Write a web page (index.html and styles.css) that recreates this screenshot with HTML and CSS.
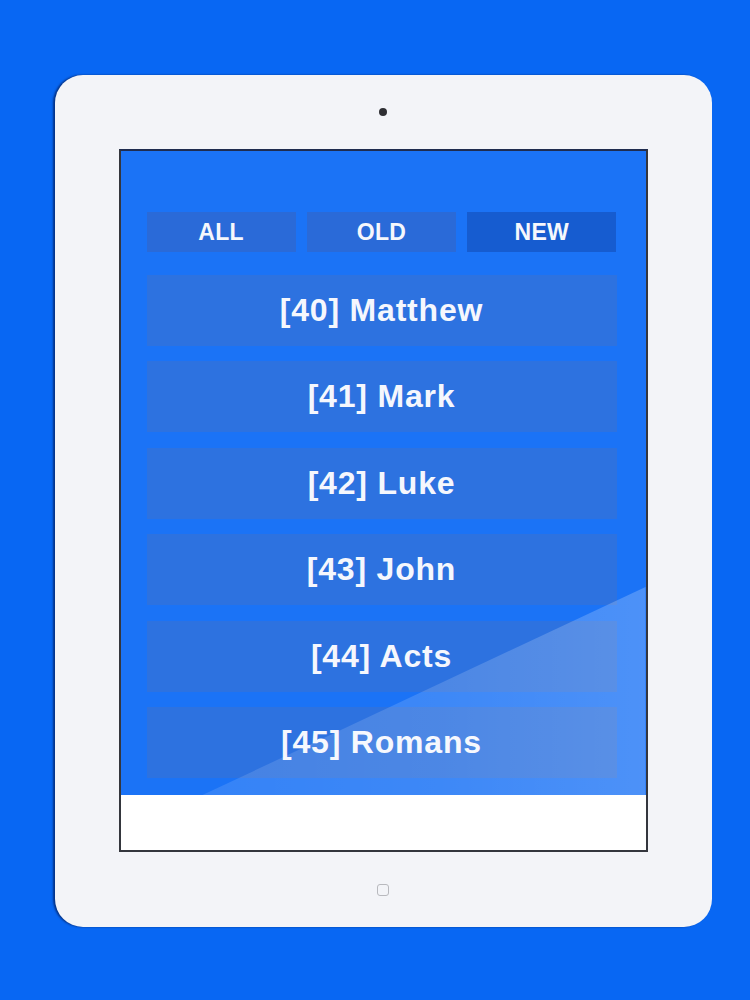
FILE: index.html
```html
<!DOCTYPE html>
<html>
<head>
<meta charset="utf-8">
<link rel="stylesheet" href="styles.css">
</head>
<body>
<div class="device">
  <div class="top-bezel"><span class="camera"></span></div>
  <div class="screen">
    <div class="app">
      <div class="tabs">
        <div class="tab">ALL</div>
        <div class="tab">OLD</div>
        <div class="tab active">NEW</div>
      </div>
      <div class="list">
        <div class="item">[40] Matthew</div>
        <div class="item">[41] Mark</div>
        <div class="item">[42] Luke</div>
        <div class="item">[43] John</div>
        <div class="item">[44] Acts</div>
        <div class="item">[45] Romans</div>
      </div>
      <div class="shine"></div>
    </div>
    <div class="footer"></div>
  </div>
  <div class="bottom-bezel"><span class="home"></span></div>
</div>
</body>
</html>
```
FILE: styles.css
```css
html, body {
  margin: 0;
  padding: 0;
}
body {
  background: #0867f3;
  width: 750px;
  height: 1000px;
  overflow: hidden;
  font-family: "Liberation Sans", Arial, sans-serif;
}
.device {
  margin: 75px 0 0 55px;
  width: 657px;
  height: 852px;
  background: #f3f4f8;
  border-radius: 28px;
  box-shadow: -2px 0 2px rgba(0, 10, 50, 0.55);
  display: flex;
  flex-direction: column;
  align-items: center;
}
.top-bezel {
  height: 74px;
  width: 100%;
  display: flex;
  align-items: center;
  justify-content: center;
}
.camera {
  width: 8px;
  height: 8px;
  border-radius: 50%;
  background: #2e2e33;
  margin-left: -1px;
}
.screen {
  width: 525px;
  height: 699px;
  border: 2px solid #34363d;
  border-top-color: #1f2c4f;
  display: flex;
  flex-direction: column;
  margin-left: -1px;
}
.app {
  position: relative;
  height: 644px;
  background: #1b73f6;
  padding: 61px 29px 0 26px;
  box-sizing: border-box;
  overflow: hidden;
}
.tabs {
  display: flex;
  gap: 11px;
  height: 40px;
  margin-bottom: 23px;
}
.tab {
  flex: 1;
  background: #2a6ad8;
  color: #f5f7fc;
  font-weight: bold;
  font-size: 23px;
  letter-spacing: 0.3px;
  display: flex;
  align-items: center;
  justify-content: center;
}
.tab.active {
  background: #165cd0;
}
.list {
  display: flex;
  flex-direction: column;
  gap: 15.4px;
}
.item {
  height: 71px;
  background: rgba(100, 112, 160, 0.25);
  color: #f5f7fd;
  font-weight: bold;
  font-size: 32px;
  letter-spacing: 0.8px;
  display: flex;
  align-items: center;
  justify-content: center;
}
.shine {
  position: absolute;
  inset: 0;
  pointer-events: none;
  background: linear-gradient(90deg, rgba(255,255,255,0.1) 0%, rgba(255,255,255,0.15) 60%, rgba(255,255,255,0.22) 100%);
  clip-path: polygon(82px 644px, 100% 436px, 100% 100%);
}
.footer {
  flex: 1;
  background: #ffffff;
}
.bottom-bezel {
  flex: 1;
  width: 100%;
  display: flex;
  align-items: center;
  justify-content: center;
}
.home {
  width: 10px;
  height: 10px;
  border: 1.5px solid #b8b9be;
  border-radius: 3px;
  margin-left: -1px;
}
```
